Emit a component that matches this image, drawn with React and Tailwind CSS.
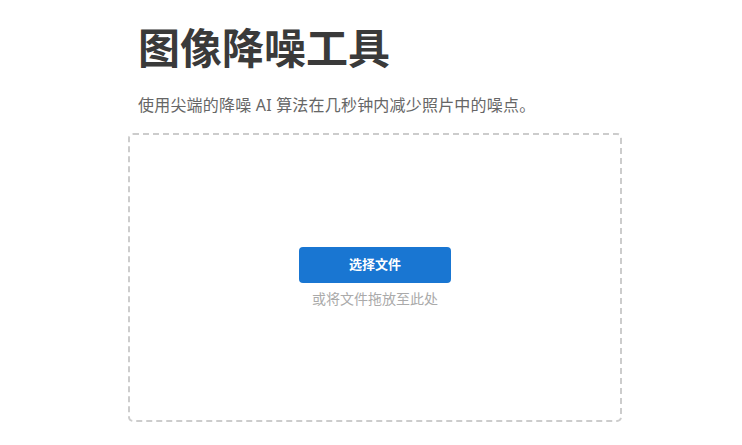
import React from "react";

export default function App() {
  return (
    <div
      className="w-full h-[445px] bg-white overflow-hidden"
      style={{ fontFamily: '"Noto Sans", "Noto Sans CJK SC", sans-serif' }}
    >
      <div className="w-[494px] ml-[128px]">
        {/* Header */}
        <div className="pl-[10px] pt-[18px]">
          <h1 className="text-[42px] leading-[60px] font-bold text-[#3a3a3a]">
            图像降噪工具
          </h1>
          <p className="mt-[16px] text-[16px] leading-[22px] text-[#666] tracking-[0.2px]">
            使用尖端的降噪 AI 算法在几秒钟内减少照片中的噪点。
          </p>
        </div>

        {/* Drop zone */}
        <div className="mt-[17px] h-[289px] border-2 border-dashed border-[#ccc] rounded-[5px] flex flex-col items-center justify-center">
          <button
            type="button"
            className="w-[152px] h-[36px] bg-[#1976d2] text-white text-[13px] font-bold rounded-[4px]"
          >
            选择文件
          </button>
          <p className="mt-[6px] text-[14px] leading-[20px] text-[#aaa]">
            或将文件拖放至此处
          </p>
        </div>
      </div>
    </div>
  );
}
